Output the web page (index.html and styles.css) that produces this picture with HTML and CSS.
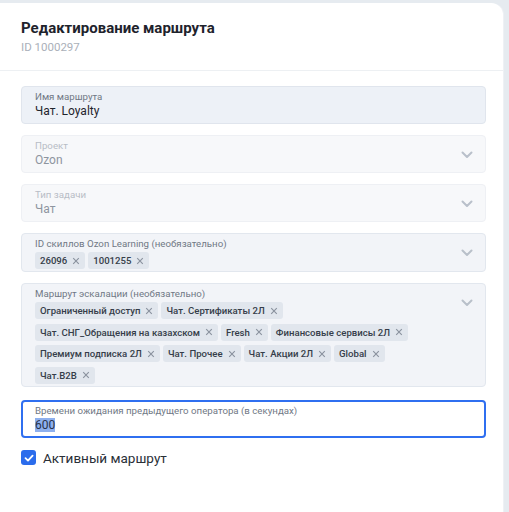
FILE: index.html
```
<!DOCTYPE html>
<html lang="ru">
<head>
<meta charset="utf-8">
<link rel="stylesheet" href="styles.css">
</head>
<body>
<div class="card">
  <div class="header">
    <div class="title">Редактирование маршрута</div>
    <div class="sub">ID 1000297</div>
  </div>
  <div class="form">
    <div class="field active-name">
      <div class="body">
        <div class="label">Имя маршрута</div>
        <div class="value">Чат. Loyalty</div>
      </div>
    </div>
    <div class="field disabled">
      <div class="body">
        <div class="label">Проект</div>
        <div class="value">Ozon</div>
      </div>
      <svg class="chev" viewBox="0 0 12 8"><path d="M1.5 1.5 6 6l4.5-4.5"/></svg>
    </div>
    <div class="field disabled">
      <div class="body">
        <div class="label">Тип задачи</div>
        <div class="value">Чат</div>
      </div>
      <svg class="chev" viewBox="0 0 12 8"><path d="M1.5 1.5 6 6l4.5-4.5"/></svg>
    </div>
    <div class="field tags-field">
      <div class="body">
        <div class="label">ID скиллов Ozon Learning (необязательно)</div>
        <div class="chips">
          <div class="row">
            <span class="chip">26096<svg viewBox="0 0 10 10"><path d="M1.5 1.5l7 7M8.5 1.5l-7 7"/></svg></span>
            <span class="chip">1001255<svg viewBox="0 0 10 10"><path d="M1.5 1.5l7 7M8.5 1.5l-7 7"/></svg></span>
          </div>
        </div>
      </div>
      <svg class="chev" viewBox="0 0 12 8"><path d="M1.5 1.5 6 6l4.5-4.5"/></svg>
    </div>
    <div class="field tags-field">
      <div class="body">
        <div class="label">Маршрут эскалации (необязательно)</div>
        <div class="chips">
          <div class="row">
            <span class="chip">Ограниченный доступ<svg viewBox="0 0 10 10"><path d="M1.5 1.5l7 7M8.5 1.5l-7 7"/></svg></span>
            <span class="chip">Чат. Сертификаты 2Л<svg viewBox="0 0 10 10"><path d="M1.5 1.5l7 7M8.5 1.5l-7 7"/></svg></span>
          </div>
          <div class="row">
            <span class="chip">Чат. СНГ_Обращения на казахском<svg viewBox="0 0 10 10"><path d="M1.5 1.5l7 7M8.5 1.5l-7 7"/></svg></span>
            <span class="chip">Fresh<svg viewBox="0 0 10 10"><path d="M1.5 1.5l7 7M8.5 1.5l-7 7"/></svg></span>
            <span class="chip">Финансовые сервисы 2Л<svg viewBox="0 0 10 10"><path d="M1.5 1.5l7 7M8.5 1.5l-7 7"/></svg></span>
          </div>
          <div class="row">
            <span class="chip">Премиум подписка 2Л<svg viewBox="0 0 10 10"><path d="M1.5 1.5l7 7M8.5 1.5l-7 7"/></svg></span>
            <span class="chip">Чат. Прочее<svg viewBox="0 0 10 10"><path d="M1.5 1.5l7 7M8.5 1.5l-7 7"/></svg></span>
            <span class="chip">Чат. Акции 2Л<svg viewBox="0 0 10 10"><path d="M1.5 1.5l7 7M8.5 1.5l-7 7"/></svg></span>
            <span class="chip">Global<svg viewBox="0 0 10 10"><path d="M1.5 1.5l7 7M8.5 1.5l-7 7"/></svg></span>
          </div>
          <div class="row">
            <span class="chip">Чат.B2B<svg viewBox="0 0 10 10"><path d="M1.5 1.5l7 7M8.5 1.5l-7 7"/></svg></span>
          </div>
        </div>
      </div>
      <svg class="chev" viewBox="0 0 12 8"><path d="M1.5 1.5 6 6l4.5-4.5"/></svg>
    </div>
    <div class="field focused">
      <div class="body">
        <div class="label">Времени ожидания предыдущего оператора (в секундах)</div>
        <div class="value"><span class="sel">600</span></div>
      </div>
    </div>
    <label class="check">
      <span class="box"><svg viewBox="0 0 12 12"><path d="M2.5 6.2 5 8.6l4.6-5"/></svg></span>
      <span class="check-text">Активный маршрут</span>
    </label>
  </div>
</div>
</body>
</html>
```
FILE: styles.css
```
* { box-sizing: border-box; }
html, body { margin: 0; padding: 0; }
body {
  background: #e6ebf0;
  font-family: Roboto, "Noto Sans", sans-serif;
  width: 509px;
  height: 512px;
  overflow: hidden;
}
.card {
  margin-top: 3px;
  width: 503px;
  height: 509px;
  background: #fff;
  border-top-right-radius: 12px;
  box-shadow: 1px 0 0 #eef1f5;
}
.header {
  padding: 14px 21px 15px;
  border-bottom: 1px solid #edf0f3;
}
.title {
  font-size: 15px;
  font-weight: 700;
  line-height: 22px;
  color: #1e232c;
}
.sub {
  font-size: 11.5px;
  line-height: 16px;
  color: #aab0b9;
}
.form {
  padding: 15px 17px 0 21px;
  display: flex;
  flex-direction: column;
}
.field {
  display: flex;
  align-items: flex-start;
  border: 1px solid #e2e7ee;
  border-radius: 4px;
  background: #f4f6f9;
  padding: 4px 12px 4px 13px;
  margin-bottom: 11px;
}
.field .body { flex: 1; min-width: 0; }
.label {
  font-size: 9.7px;
  line-height: 12px;
  color: #707885;
}
.value {
  font-size: 12px;
  line-height: 16px;
  color: #1f242c;
}
.active-name { background: #edf1f7; border-color: #e0e5ed; }
.disabled { background: #f7f8fa; border-color: #eef0f4; }
.disabled .label { color: #b7bdc6; }
.disabled .value { color: #8e95a0; }
.chev {
  width: 12px;
  height: 8px;
  margin-top: 11px;
  fill: none;
  stroke: #b9c0ca;
  stroke-width: 2;
  stroke-linecap: round;
  stroke-linejoin: round;
  flex-shrink: 0;
}
.tags-field { background: #f2f4f8; padding-bottom: 2px; }
.chips {
  display: flex;
  flex-direction: column;
  gap: 4.5px;
  margin-top: 2px;
}
.row {
  display: flex;
  gap: 3px;
}
.chip {
  display: inline-flex;
  align-items: center;
  gap: 5px;
  height: 17px;
  padding: 0 5px 0 5px;
  background: #e1e6ed;
  border-radius: 3px;
  font-size: 9.6px;
  font-weight: 500;
  color: #353d49;
  white-space: nowrap;
}
.chip svg {
  width: 8px;
  height: 8px;
  fill: none;
  stroke: #8a929e;
  stroke-width: 1.4;
}
.focused {
  border: 2px solid #2f6ff0;
  background: #fff;
  padding: 3px 12px 3px 12px;
  margin-top: 2px;
}
.sel { background: #8eb0ee; color: #27324a; }
.check {
  display: flex;
  align-items: center;
  gap: 7px;
  margin-top: 0;
}
.box {
  width: 15px;
  height: 15px;
  border-radius: 3px;
  background: #2b6cec;
  display: flex;
  align-items: center;
  justify-content: center;
}
.box svg {
  width: 12px;
  height: 12px;
  fill: none;
  stroke: #fff;
  stroke-width: 1.8;
  stroke-linecap: round;
  stroke-linejoin: round;
}
.check-text {
  font-size: 13.5px;
  color: #2a2f37;
  line-height: 18px;
}
```
